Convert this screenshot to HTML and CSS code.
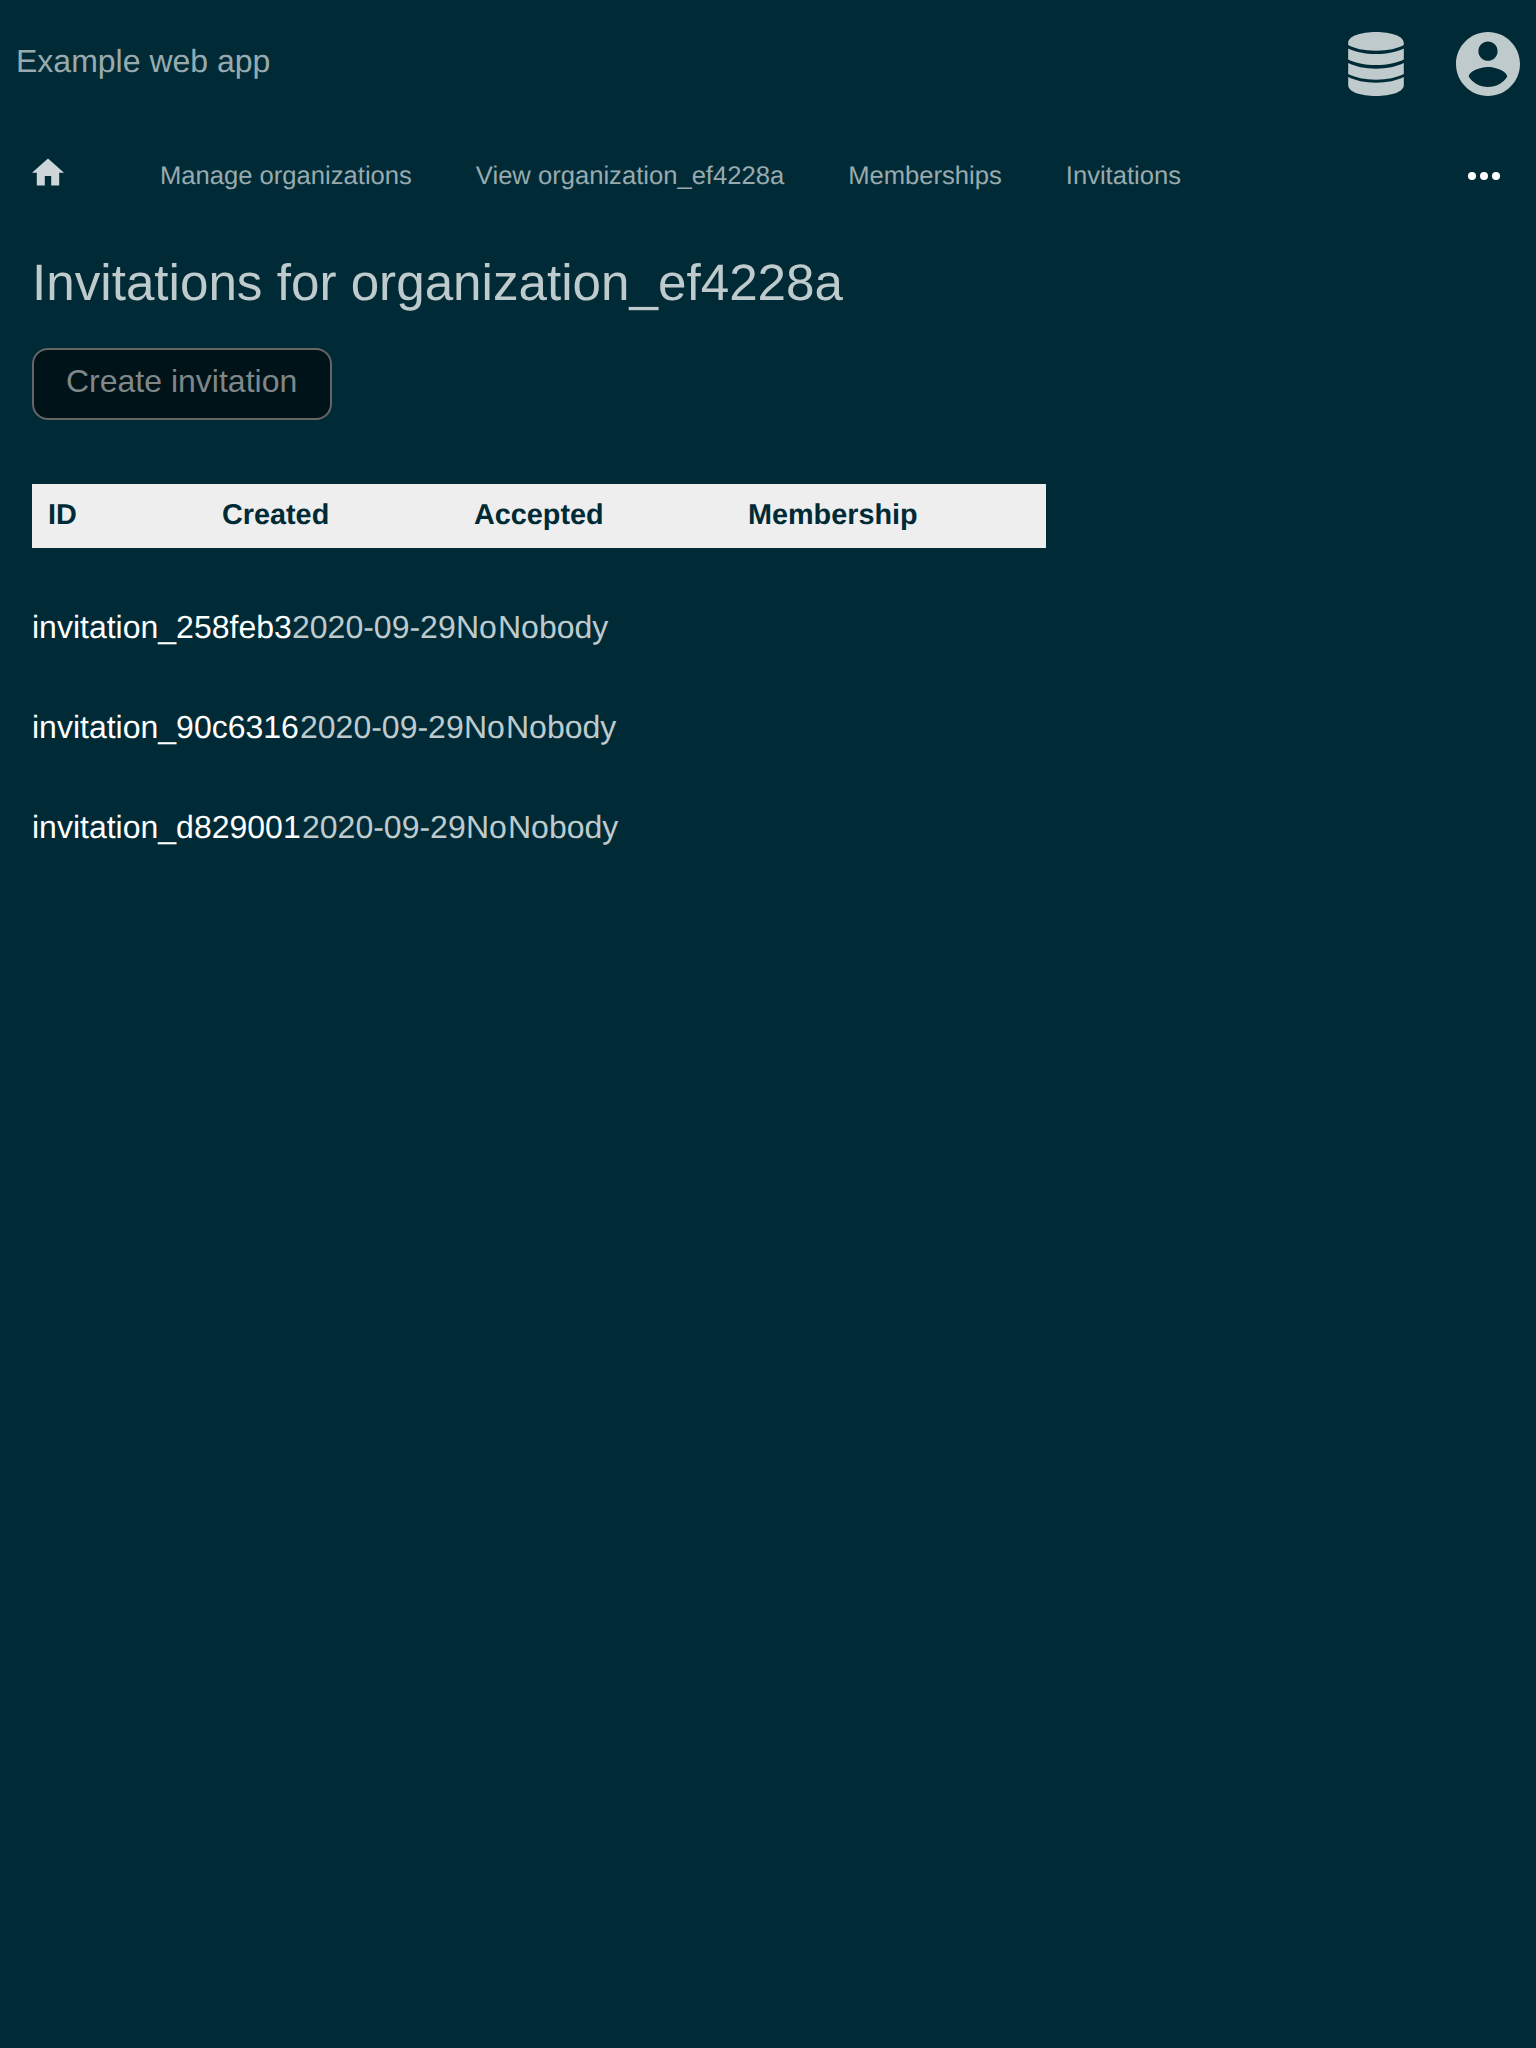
FILE: index.html
```html
<!DOCTYPE html>
<html lang="en">
<head>
<meta charset="utf-8">
<title>Example web app</title>
<link rel="stylesheet" href="styles.css">
</head>
<body>
<header class="topbar">
  <a class="brand">Example web app</a>
  <div class="tools">
    <svg class="icon-db" viewBox="0 0 56 64"><path d="M0.2 11C0.2 4 13 0 28 0s27.800 4 27.800 11v2C50 16.500 40 18.700 28 18.700S6 16.500 0.200 13zM0.200 16.500C7 20 17 22 28 22s21-2 27.800-5.500V27.500C49 31 39 33 28 33S7 31 0.200 27.500zM0.200 31C7 34.500 17 36.700 28 36.700s21-2.200 27.800-5.700V42C49 45.500 39 47.700 28 47.700S7 45.500 0.200 42zM0.200 45C7 48.500 17 50.700 28 50.700s21-2.200 27.800-5.700v8C55.800 60 43 64 28 64S0.200 60 0.200 53z"/></svg>
    <svg class="icon-user" viewBox="2 2 20 20"><path d="M12 2C6.480 2 2 6.480 2 12s4.480 10 10 10 10-4.480 10-10S17.520 2 12 2zm0 3c1.660 0 3 1.340 3 3s-1.340 3-3 3-3-1.340-3-3 1.340-3 3-3zm0 14.200c-2.500 0-4.710-1.280-6-3.220.03-1.990 4-3.080 6-3.080 1.990 0 5.970 1.090 6 3.080-1.290 1.940-3.500 3.220-6 3.220z"/></svg>
  </div>
</header>
<nav class="crumbs">
  <svg class="icon-home" viewBox="2 2.750 20 17.500"><path d="M10 20v-6h4v6h5v-8h3L12 3 2 12h3v8z"/></svg>
  <a>Manage organizations</a>
  <a>View organization_ef4228a</a>
  <a>Memberships</a>
  <a>Invitations</a>
  <svg class="icon-more" viewBox="0 0 32 8"><circle cx="4" cy="4" r="4"/><circle cx="16" cy="4" r="4"/><circle cx="28" cy="4" r="4"/></svg>
</nav>
<main class="content">
  <h1 class="title">Invitations for organization_ef4228a</h1>
  <button class="create">Create invitation</button>
  <div class="table-head">
    <span>ID</span><span>Created</span><span>Accepted</span><span>Membership</span>
  </div>
  <div class="row"><a style="min-width: 260px">invitation_258feb3</a><span class="date">2020-09-29</span><span class="accepted">No</span><span>Nobody</span></div>
  <div class="row"><a style="min-width: 268px">invitation_90c6316</a><span class="date">2020-09-29</span><span class="accepted">No</span><span>Nobody</span></div>
  <div class="row"><a style="min-width: 270px">invitation_d829001</a><span class="date">2020-09-29</span><span class="accepted">No</span><span>Nobody</span></div>
</main>
</body>
</html>
```
FILE: styles.css
```css
* { box-sizing: border-box; }
body {
  margin: 0;
  min-height: 2048px;
  background: #002b36;
  color: #bfcacd;
  font: 32px/36px "Liberation Sans", Arial, sans-serif;
  text-rendering: geometricPrecision;
}
svg { display: block; fill: currentColor; }
.topbar {
  display: flex;
  justify-content: space-between;
  height: 128px;
  padding: 32px 16px 0;
}
.brand { padding-top: 11px; color: #99aaaf; }
.tools { display: flex; gap: 52px; }
.icon-db { width: 56px; height: 64px; }
.icon-user { width: 64px; height: 64px; }
.crumbs {
  display: flex;
  gap: 64px;
  height: 96px;
  padding: 30px 36px 0 32px;
  color: #99aaaf;
  font-size: 25.6px;
  line-height: 36px;
}
.icon-home { width: 32px; height: 28px; margin-right: 32px; color: #ccd5d7; }
.icon-more { width: 32px; height: 8px; margin: 14px 0 0 auto; color: #fff; }
.content { padding: 29px 32px 0; }
.title { margin: 0; font-size: 51.2px; font-weight: 400; line-height: 60px; }
.create {
  display: block;
  width: 300px;
  height: 72px;
  margin-top: 35px;
  padding: 0 32px 6px;
  border: 2px solid #666;
  border-radius: 16px;
  background: #001318;
  color: #7f8789;
  font: inherit;
  text-align: left;
  white-space: nowrap;
}
.table-head {
  display: grid;
  grid-template-columns: 174px 252px 274px 1fr;
  width: 1014px;
  height: 64px;
  margin: 64px 0 44px;
  padding: 13px 16px 0;
  background: #eee;
  color: #002b36;
  font-size: 28.8px;
  font-weight: 700;
}
.row { display: flex; height: 100px; padding-top: 17px; }
.row a { color: #fff; }
.date { min-width: 164px; }
.accepted { min-width: 42px; }
```
